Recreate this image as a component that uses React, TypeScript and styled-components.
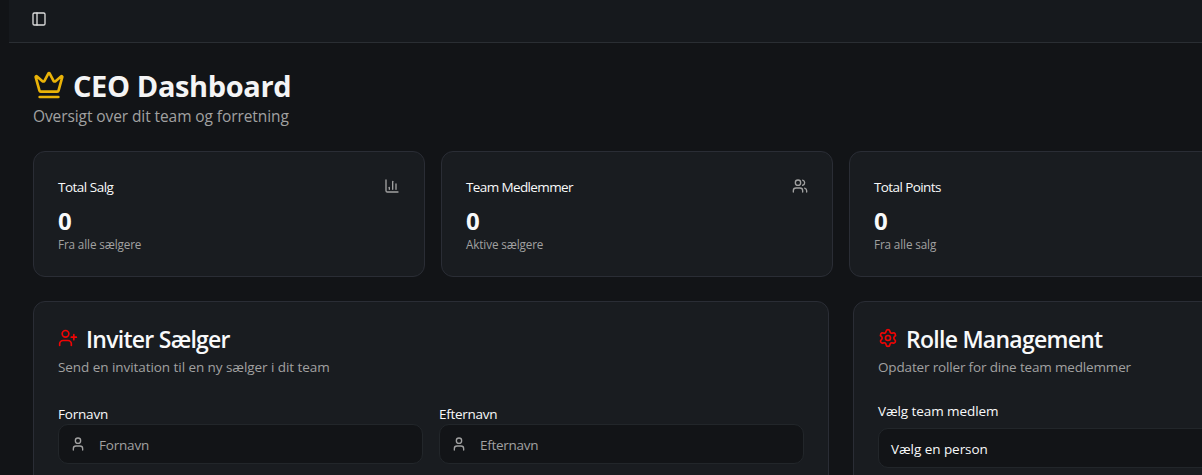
import React from "react";
import styled, { createGlobalStyle } from "styled-components";
import { Award, ChartColumn, Crown, PanelLeft, Settings, User, UserPlus, Users } from "lucide-react";

const GlobalStyle = createGlobalStyle`
  *, *::before, *::after { box-sizing: border-box; }
  body {
    margin: 0;
    overflow: hidden;
    background: #121417;
    color: #f8f9fa;
    font-family: "Segoe UI", "Open Sans", "Noto Sans", sans-serif;
  }
  h1, h2, p { margin: 0; }
`;

const Shell = styled.div`
  height: 475px;
  padding-left: 9px;
  overflow: hidden;
`;

const Main = styled.div`
  width: 1664px;
`;

const TopBar = styled.header`
  display: flex;
  align-items: flex-start;
  height: 43px;
  padding: 11px 22px 0;
  background: #16191d;
  border-bottom: 1px solid #2a2e33;
`;

const Content = styled.main`
  display: flex;
  flex-direction: column;
  gap: 24px;
  padding: 24px;
`;

const Heading = styled.div`
  height: 60px;
`;

const PageTitle = styled.h1`
  display: flex;
  align-items: center;
  gap: 8px;
  height: 36px;
  font-size: 29px;
  font-weight: 700;
  line-height: 36px;
  color: #f4f4f5;

  span { padding-top: 2px; }
`;

const Fit = styled.span<{ $spacing?: number }>`
  letter-spacing: ${(p) => p.$spacing ?? 0}px;
  white-space: nowrap;
`;

const Subtitle = styled.p`
  font-size: 15.5px;
  line-height: 24px;
  padding-top: 1px;
  color: #a1a1a1;
`;

const StatGrid = styled.section`
  display: grid;
  grid-template-columns: repeat(4, 1fr);
  gap: 16px;
`;

const Card = styled.article`
  padding: 24px;
  background: #191c20;
  border: 1px solid #2a2d35;
  border-radius: 12px;
`;

const StatCard = styled(Card)`
  height: 126px;
`;

const StatHead = styled.div`
  display: flex;
  align-items: center;
  justify-content: space-between;
  height: 20px;
  margin-bottom: 9px;
  font-size: 13.5px;

  span { padding-top: 2px; }
  svg { color: #a1a1a1; margin-bottom: 1px; }
`;

const StatValue = styled.div`
  font-size: 24px;
  font-weight: 700;
  line-height: 32px;
`;

const StatNote = styled.p`
  margin-top: -1px;
  font-size: 11.7px;
  line-height: 16px;
  color: #a1a1a1;
`;

const PanelGrid = styled.section`
  display: grid;
  grid-template-columns: repeat(2, 1fr);
  gap: 24px;
`;

const Panel = styled(Card)`
  height: 420px;
`;

const PanelTitle = styled.h2`
  display: flex;
  align-items: center;
  gap: 8px;
  height: 26px;
  font-size: 23px;
  font-weight: 600;
  line-height: 26px;

  svg { color: #f00505; margin-bottom: 3px; }
`;

const PanelNote = styled.p`
  margin-top: 5px;
  font-size: 13.5px;
  line-height: 20px;
  color: #a1a1a1;
`;

const FieldRow = styled.div`
  display: grid;
  grid-template-columns: 1fr 1fr;
  gap: 16px;
  padding-top: 27px;
`;

const SelectField = styled.div`
  padding-top: 24px;
`;

const Label = styled.label<{ $gap: number }>`
  display: block;
  height: 20px;
  margin-bottom: ${(p) => p.$gap}px;
  font-size: 13.5px;
  line-height: 20px;
`;

const Control = styled.div<{ $muted?: boolean }>`
  display: flex;
  align-items: center;
  gap: 13px;
  height: 40px;
  padding: 0 ${(p) => (p.$muted ? 11 : 12)}px;
  background: #121417;
  border: 1px solid #22262a;
  border-radius: 10px;
  font-size: 13.5px;
  color: ${(p) => (p.$muted ? "#a1a1a1" : "#f8f9fa")};

  span { padding-top: 1px; }
`;

const stats = [
  { title: "Total Salg", value: "0", note: "Fra alle sælgere", Icon: ChartColumn, spacing: -0.5 },
  { title: "Team Medlemmer", value: "0", note: "Aktive sælgere", Icon: Users, spacing: -0.62 },
  { title: "Total Points", value: "0", note: "Fra alle salg", Icon: Award, spacing: -0.6 },
];

const fields = [
  { name: "Fornavn", spacing: -0.2 },
  { name: "Efternavn", spacing: -0.28 },
];

export default function App() {
  return (
    <Shell>
      <GlobalStyle />
      <Main>
        <TopBar>
          <PanelLeft size={16} color="#dcdcdc" />
        </TopBar>
        <Content>
          <Heading>
            <PageTitle>
              <Crown size={32} color="#eab308" />
              <Fit $spacing={-0.38}>CEO Dashboard</Fit>
            </PageTitle>
            <Subtitle><Fit $spacing={-0.09}>Oversigt over dit team og forretning</Fit></Subtitle>
          </Heading>
          <StatGrid>
            {stats.map(({ title, value, note, Icon, spacing }) => (
              <StatCard key={title}>
                <StatHead>
                  <Fit $spacing={spacing}>{title}</Fit>
                  <Icon size={16} />
                </StatHead>
                <StatValue>{value}</StatValue>
                <StatNote><Fit $spacing={-0.12}>{note}</Fit></StatNote>
              </StatCard>
            ))}
          </StatGrid>
          <PanelGrid>
            <Panel>
              <PanelTitle><UserPlus size={20} /><Fit $spacing={-0.73}>Inviter Sælger</Fit></PanelTitle>
              <PanelNote><Fit $spacing={-0.06}>Send en invitation til en ny sælger i dit team</Fit></PanelNote>
              <FieldRow>
                {fields.map(({ name, spacing }) => (
                  <div key={name}>
                    <Label $gap={0}><Fit $spacing={spacing}>{name}</Fit></Label>
                    <Control $muted><User size={16} /><Fit $spacing={spacing}>{name}</Fit></Control>
                  </div>
                ))}
              </FieldRow>
            </Panel>
            <Panel>
              <PanelTitle><Settings size={20} /><Fit $spacing={-0.73}>Rolle Management</Fit></PanelTitle>
              <PanelNote><Fit $spacing={-0.16}>Opdater roller for dine team medlemmer</Fit></PanelNote>
              <SelectField>
                <Label $gap={7}><Fit $spacing={-0.08}>Vælg team medlem</Fit></Label>
                <Control><Fit $spacing={-0.05}>Vælg en person</Fit></Control>
              </SelectField>
            </Panel>
          </PanelGrid>
        </Content>
      </Main>
    </Shell>
  );
}
